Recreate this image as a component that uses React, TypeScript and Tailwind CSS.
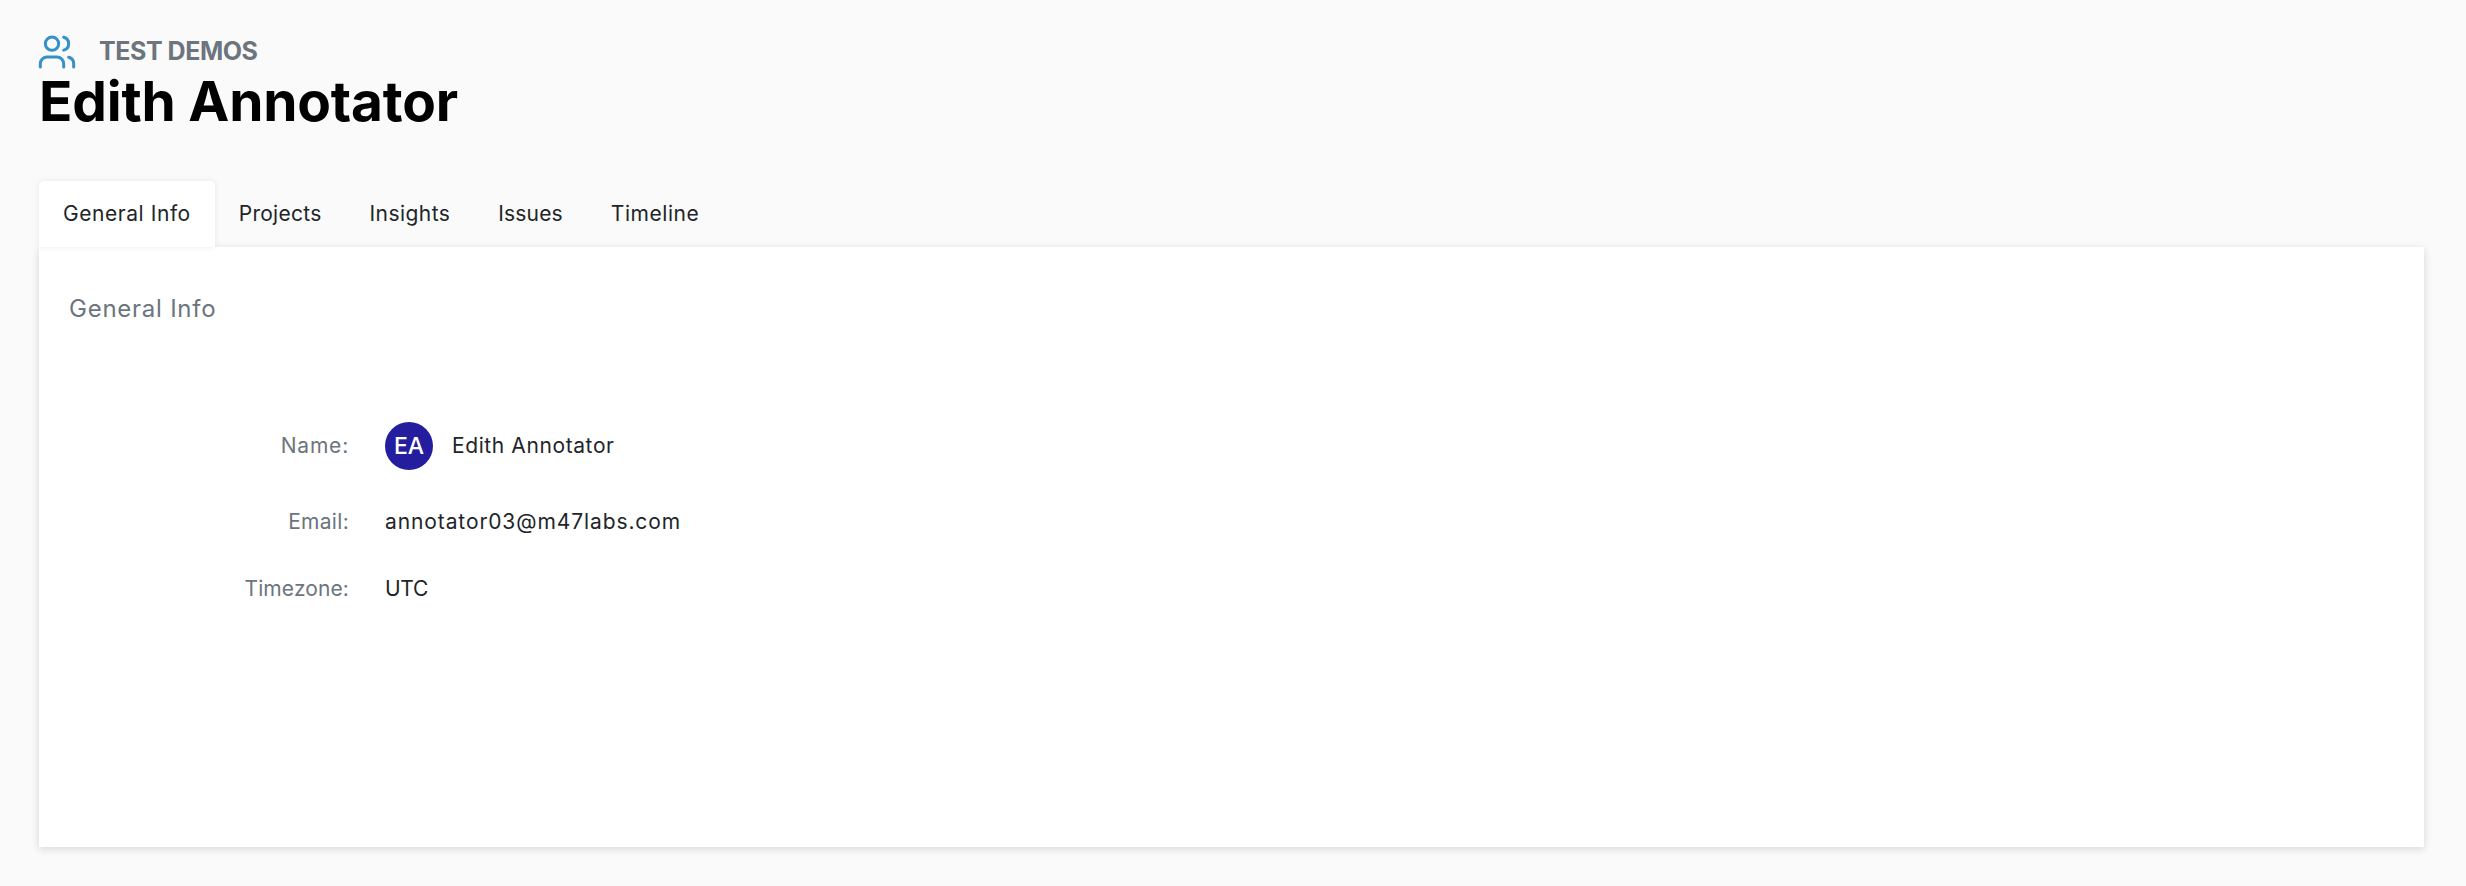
import { Users } from "lucide-react";

const tabs = [
  { name: "General Info", cls: "tracking-[0.56px]" },
  { name: "Projects", cls: "tracking-[0.26px]" },
  { name: "Insights", cls: "tracking-[0.44px]" },
  { name: "Issues", cls: "tracking-[0.16px]" },
  { name: "Timeline", cls: "tracking-[0.56px]" },
];

const rows = [
  { label: "Email:", value: "annotator03@m47labs.com", labelCls: "tracking-[0.3px]", valueCls: "tracking-[0.9px]", gap: "mt-[24px]" },
  { label: "Timezone:", value: "UTC", labelCls: "tracking-[0.1px]", valueCls: "tracking-[-0.3px]", gap: "mt-[15px]" },
];

export default function App() {
  return (
    <main className="h-[886px] overflow-hidden bg-[#fafafa] pt-[33px] pl-[39px] pr-[42px] font-['Inter',sans-serif]">
      {/* Header */}
      <div className="flex items-center h-[38px]">
        <Users className="w-[40px] h-[40px] -ml-[2px] text-[#3392c9]" strokeWidth={1.8} />
        <span className="ml-[22px] text-[25px] font-bold text-[#6c757d] tracking-[-0.45px]">TEST DEMOS</span>
      </div>
      <h1 className="text-[55px] leading-[60px] font-bold text-black tracking-[-0.2px]">Edith Annotator</h1>

      {/* Tabs */}
      <div className="mt-[50px] flex h-[66px]">
        {tabs.map((t, i) => (
          <div
            key={t.name}
            className={
              i === 0
                ? `${t.cls} flex items-center px-[24px] rounded-t-[5px] bg-white text-[#212529] text-[21px] shadow-[0_0_6px_rgba(0,0,0,0.08)] relative z-10`
                : `${t.cls} flex items-center px-[24px] text-[#212529] text-[21px]`
            }
          >
            {t.name}
          </div>
        ))}
      </div>

      {/* Panel */}
      <section className="h-[600px] bg-white shadow-[0_2px_8px_rgba(0,0,0,0.14)] relative z-0 pt-[48px] pl-[30px]">
        <h2 className="text-[24px] leading-[28px] text-[#6c757d] tracking-[0.75px]">General Info</h2>
        <div className="mt-[97px] grid grid-cols-[280px_1fr] gap-x-[36px] text-[21px]">
          <div className="h-[52px] flex items-center justify-end text-[#6c757d] tracking-[0.8px]">Name:</div>
          <div className="h-[52px] flex items-center text-[#212529] tracking-[0.6px]">
            <span className="w-[48px] h-[48px] rounded-full bg-[#241e9e] text-white flex items-center justify-center text-[23px] font-medium tracking-normal">EA</span>
            <span className="ml-[19px]">Edith Annotator</span>
          </div>
          {rows.map((r) => (
            <div key={r.label} className="contents">
              <div className={`${r.gap} ${r.labelCls} h-[52px] flex items-center justify-end text-[#6c757d]`}>{r.label}</div>
              <div className={`${r.gap} ${r.valueCls} h-[52px] flex items-center text-[#212529]`}>{r.value}</div>
            </div>
          ))}
        </div>
      </section>
    </main>
  );
}
